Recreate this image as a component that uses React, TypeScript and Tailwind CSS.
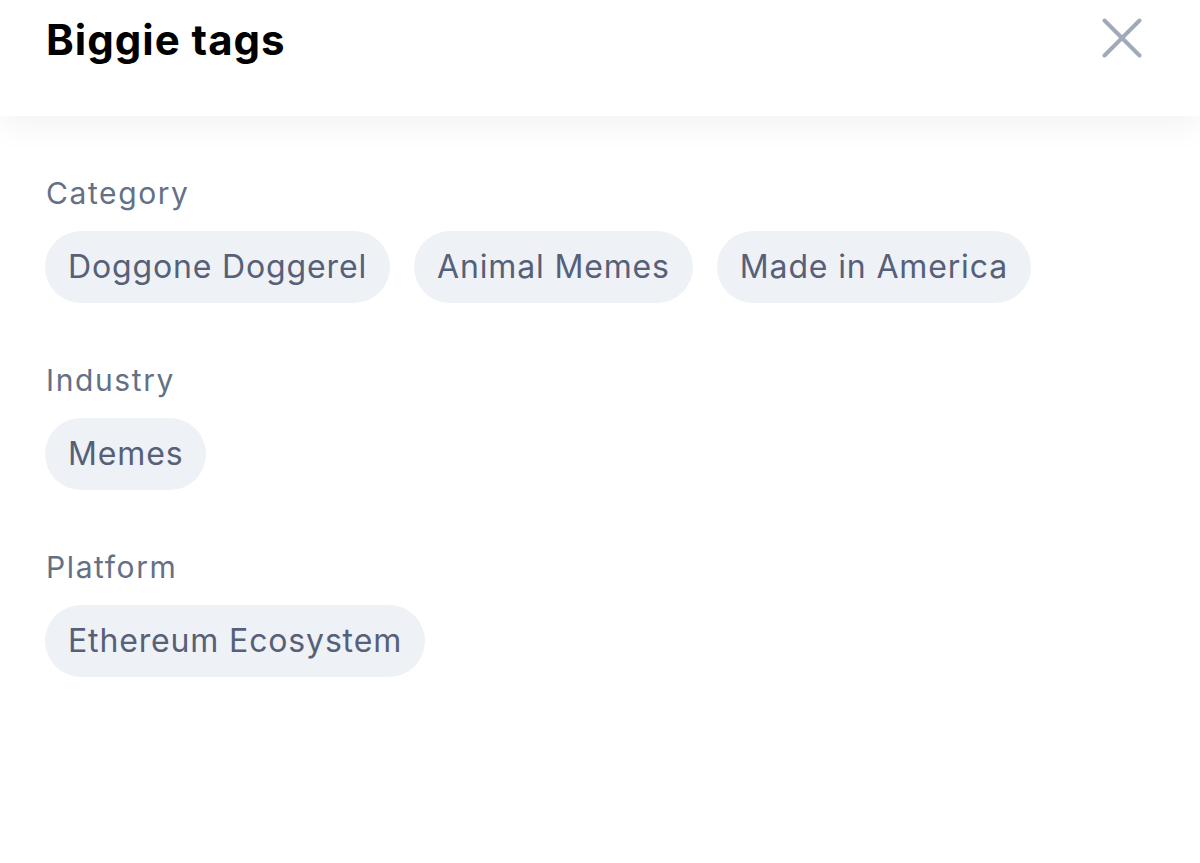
const sections = [
  { label: "Category", tags: ["Doggone Doggerel", "Animal Memes", "Made in America"] },
  { label: "Industry", tags: ["Memes"] },
  { label: "Platform", tags: ["Ethereum Ecosystem"] },
];

export default function App() {
  return (
    <div className="w-[1200px] h-[863px] bg-white overflow-hidden font-['Inter',sans-serif]">
      <header className="relative z-10 h-[116px] bg-white flex items-start justify-between pl-[46px] pr-[58px] pt-[13px] shadow-[0_10px_30px_rgba(15,23,42,0.05)]">
        <h1 className="text-[42px] leading-[54px] font-bold text-black tracking-[1px]">Biggie tags</h1>
        <button className="mt-[5px] w-[40px] h-[40px] flex items-center justify-center">
          <svg width="40" height="40" viewBox="0 0 40 40" fill="none">
            <path d="M2.5 2.5L37.5 37.5M37.5 2.5L2.5 37.5" stroke="#a0aabb" strokeWidth="4" strokeLinecap="round" />
          </svg>
        </button>
      </header>
      <main className="px-[45px] pt-[59px] flex flex-col gap-[59px]">
        {sections.map((s) => (
          <section key={s.label} className="flex flex-col gap-[20px]">
            <p className="pl-px text-[30px] leading-[36px] tracking-[1.6px] text-[#647086]">{s.label}</p>
            <div className="flex flex-wrap gap-[24px]">
              {s.tags.map((t) => (
                <span
                  key={t}
                  className="h-[72px] px-[23px] rounded-full bg-[#eef1f6] flex items-center text-[32px] tracking-[0.85px] text-[#566078]"
                >
                  {t}
                </span>
              ))}
            </div>
          </section>
        ))}
      </main>
    </div>
  );
}
